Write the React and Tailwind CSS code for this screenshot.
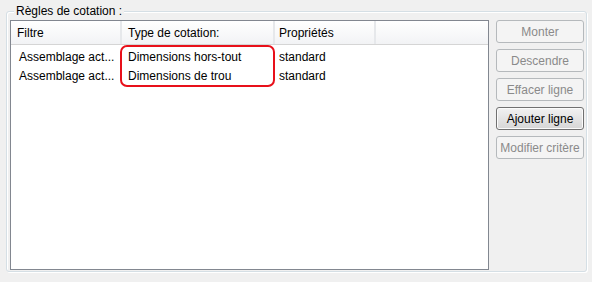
const rows = [
  { filtre: "Assemblage act...", type: "Dimensions hors-tout", prop: "standard" },
  { filtre: "Assemblage act...", type: "Dimensions de trou", prop: "standard" },
];

const buttons = [
  { label: "Monter", enabled: false },
  { label: "Descendre", enabled: false },
  { label: "Effacer ligne", enabled: false },
  { label: "Ajouter ligne", enabled: true },
  { label: "Modifier critère", enabled: false },
];

function Button({ label, enabled }) {
  const base = "h-[23px] w-[88px] rounded-[3px] border text-[12px] leading-none flex items-center justify-center";
  if (enabled) {
    return (
      <button className={`${base} border-[#707070] bg-gradient-to-b from-[#f2f2f2] to-[#d6d6d6] text-black shadow-[inset_0_0_0_1px_#fbfbfb]`}>
        {label}
      </button>
    );
  }
  return (
    <button disabled className={`${base} border-[#b5b9bc] bg-[#f4f4f4] text-[#8a8a8a]`}>
      {label}
    </button>
  );
}

export default function App() {
  return (
    <div
      className="w-[592px] h-[282px] bg-[#f0f0f0] pt-[11px] pl-[6px] text-black"
      style={{ fontFamily: '"Liberation Sans", Arial, sans-serif' }}
    >
      <div className="relative w-[581px] h-[261px] border border-[#d5dfe5] rounded-[3px] shadow-[1px_1px_0_#ffffff,inset_1px_1px_0_#ffffff] flex pt-[8px] pl-[3px]">
        <span className="absolute -top-[9px] left-[7px] px-[2px] bg-[#f0f0f0] text-[12px] leading-[16px]">
          Règles de cotation :
        </span>

        {/* table */}
        <div className="relative w-[479px] h-[250px] border border-[#828790] bg-white">
          <div className="flex h-[24px] border-b border-[#d5d5d5] bg-gradient-to-b from-white to-[#f2f3f5] text-[12px]">
            <div className="w-[111px] border-r-2 border-[#e6e8eb] pl-[6px] flex items-center">Filtre</div>
            <div className="w-[153px] border-r-2 border-[#e6e8eb] pl-[6px] flex items-center">Type de cotation:</div>
            <div className="w-[101px] border-r-2 border-[#e6e8eb] pl-[4px] flex items-center">Propriétés</div>
            <div className="flex-1" />
          </div>
          <div className="pt-[2px] text-[12px]">
            {rows.map((r, i) => (
              <div key={i} className="flex h-[19px] items-center">
                <div className="w-[111px] pl-[8px] truncate">{r.filtre}</div>
                <div className="w-[153px] pl-[6px]">{r.type}</div>
                <div className="w-[101px] pl-[4px]">{r.prop}</div>
              </div>
            ))}
          </div>
          {/* highlight annotation */}
          <div className="absolute left-[109px] top-[24px] w-[155px] h-[42px] border-2 border-[#e8101a] rounded-[7px] pointer-events-none" />
        </div>

        {/* buttons */}
        <div className="ml-[7px] flex flex-col gap-[6px]">
          {buttons.map((b) => (
            <Button key={b.label} {...b} />
          ))}
        </div>
      </div>
    </div>
  );
}
